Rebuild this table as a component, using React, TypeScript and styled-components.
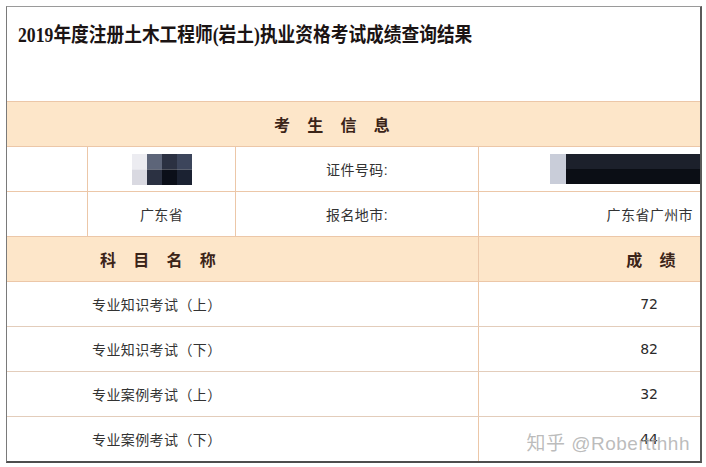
import styled, { createGlobalStyle } from "styled-components";

const GlobalStyle = createGlobalStyle`
  html, body {
    margin: 0;
    padding: 0;
    background: #ffffff;
    overflow: hidden;
  }

  body {
    font-family: "Liberation Sans", "Noto Sans CJK SC", sans-serif;
  }
`;

const LINE = "#ecc7a8";
const ROW_LINE = "#e3cdbb";
const PEACH = "#fde6c9";

const Page = styled.div`
  width: 706px;
  height: 467px;
  box-sizing: border-box;
  padding: 6px 4px 4px 6px;
  display: flex;
`;

const Frame = styled.div`
  flex: 1;
  min-width: 0;
  box-sizing: border-box;
  border-top: 1px solid #9a9a9a;
  border-left: 1px solid #7a7a7a;
  border-right: 2px solid #5a5a5a;
  border-bottom: 2px solid #4e4e4e;
  display: flex;
  flex-direction: column;
  position: relative;
  overflow: hidden;
`;

const TitleBar = styled.div`
  height: 94px;
  flex-shrink: 0;
  box-sizing: border-box;
  padding: 18px 0 0 11px;
`;

const Title = styled.h1`
  margin: 0;
  font-family: "Liberation Serif", "Noto Sans CJK SC", serif;
  font-size: 20px;
  line-height: 20px;
  font-weight: 700;
  color: #1b1414;
  white-space: nowrap;
  transform: scaleX(0.885);
  transform-origin: left center;
`;

const Row = styled.div<{ $cols: string; $band?: boolean; $line?: string }>`
  display: grid;
  grid-template-columns: ${(p) => p.$cols};
  height: 45px;
  box-sizing: border-box;
  flex-shrink: 0;
  border-top: 1px solid ${(p) => p.$line ?? LINE};
  background: ${(p) => (p.$band ? PEACH : "#ffffff")};
`;

const Cell = styled.div<{
  $align?: "left" | "center" | "right";
  $padL?: number;
  $padR?: number;
  $divider?: boolean;
}>`
  display: flex;
  align-items: center;
  justify-content: ${(p) =>
    p.$align === "right" ? "flex-end" : p.$align === "left" ? "flex-start" : "center"};
  padding-left: ${(p) => p.$padL ?? 0}px;
  padding-right: ${(p) => p.$padR ?? 0}px;
  border-left: ${(p) => (p.$divider ? `1px solid ${LINE}` : "none")};
  font-size: 14px;
  letter-spacing: 0.4px;
  color: #333333;
  white-space: nowrap;
  overflow: hidden;
`;

const BandLabel = styled.span`
  font-size: 16px;
  font-weight: 700;
  letter-spacing: 6.4px;
  color: #3b2418;
`;

const Score = styled.span`
  font-family: "DejaVu Sans", "Liberation Sans", sans-serif;
  font-size: 14px;
  letter-spacing: 0;
  color: #2a2a2a;
`;

const Watermark = styled.div`
  position: absolute;
  right: 10px;
  bottom: 6px;
  font-size: 19px;
  letter-spacing: 0.5px;
  color: rgba(176, 176, 176, 0.85);
  white-space: nowrap;
  pointer-events: none;
`;

function Mosaic() {
  const cells = [
    ["#ececf1", "#5d6579", "#2b3142", "#3c455b"],
    ["#d9d9e1", "#2b3142", "#0b0f19", "#1b2232"],
  ];
  return (
    <svg width="60" height="31" viewBox="0 0 60 31" aria-hidden="true">
      {cells.map((row, r) =>
        row.map((c, i) => (
          <rect key={`${r}-${i}`} x={i * 15} y={r * 15.5} width="15" height="15.5" fill={c} />
        ))
      )}
    </svg>
  );
}

function Redaction() {
  return (
    <svg width="150" height="30" viewBox="0 0 150 30" aria-hidden="true">
      <rect x="0" y="0" width="16" height="30" fill="#c9cdd9" />
      <rect x="16" y="0" width="134" height="15" fill="#1c202b" />
      <rect x="16" y="15" width="134" height="15" fill="#0b0e15" />
    </svg>
  );
}

const INFO_COLS = "80px 148px 243px 1fr";
const SCORE_COLS = "471px 1fr";

const subjects = [
  { name: "专业知识考试（上）", score: "72" },
  { name: "专业知识考试（下）", score: "82" },
  { name: "专业案例考试（上）", score: "32" },
  { name: "专业案例考试（下）", score: "44" },
];

export default function App() {
  return (
    <Page>
      <GlobalStyle />
      <Frame>
        <TitleBar>
          <Title>2019年度注册土木工程师(岩土)执业资格考试成绩查询结果</Title>
        </TitleBar>

        <Row $cols="1fr" $band>
          <Cell $align="left" $padL={267}>
            <BandLabel>考 生 信 息</BandLabel>
          </Cell>
        </Row>

        <Row $cols={INFO_COLS}>
          <Cell />
          <Cell $divider>
            <Mosaic />
          </Cell>
          <Cell $divider>证件号码:</Cell>
          <Cell $divider $align="right">
            <Redaction />
          </Cell>
        </Row>

        <Row $cols={INFO_COLS}>
          <Cell />
          <Cell $divider>广东省</Cell>
          <Cell $divider>报名地市:</Cell>
          <Cell $divider $align="right" $padR={7}>
            广东省广州市
          </Cell>
        </Row>

        <Row $cols={SCORE_COLS} $band>
          <Cell $align="left" $padL={93}>
            <BandLabel>科 目 名 称</BandLabel>
          </Cell>
          <Cell $divider $align="right" $padR={18}>
            <BandLabel>成 绩</BandLabel>
          </Cell>
        </Row>

        {subjects.map((s, i) => (
          <Row key={s.name} $cols={SCORE_COLS} $line={i === 0 ? LINE : ROW_LINE}>
            <Cell $align="left" $padL={85}>
              {s.name}
            </Cell>
            <Cell $divider $align="right" $padR={42}>
              <Score>{s.score}</Score>
            </Cell>
          </Row>
        ))}

        <Watermark>知乎 @Robertthhh</Watermark>
      </Frame>
    </Page>
  );
}
